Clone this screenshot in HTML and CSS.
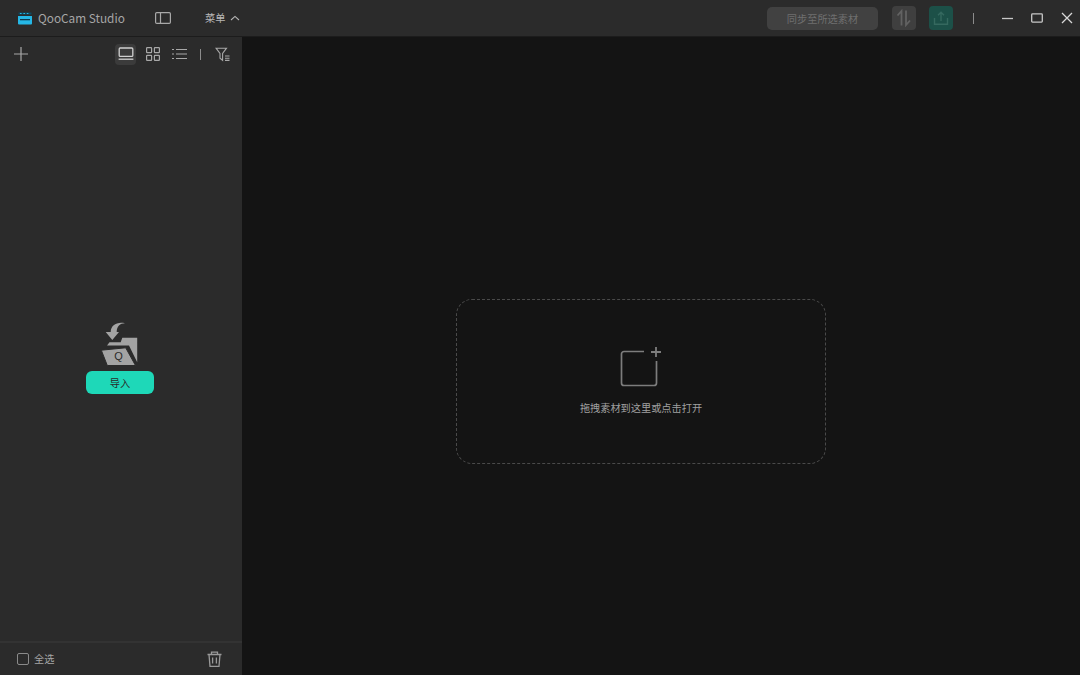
FILE: index.html
```html
<!DOCTYPE html>
<html lang="zh">
<head>
<meta charset="utf-8">
<title>QooCam Studio</title>
<link rel="stylesheet" href="styles.css">
</head>
<body>
<div class="app">
  <header class="titlebar">
    <svg class="logo" width="16" height="14" viewBox="0 0 16 14"><path d="M1 5h14v7.500a1 1 0 0 1-1 1H2a1 1 0 0 1-1-1z" fill="#25b7e6"/><path d="M3 8h10v1.300H3z" fill="#0f3a4d"/><path d="M1.500 1.500h13v2h-13z" fill="#0d4a63"/><path d="M3 2h1.600v1H3zM6.400 2H8v1H6.400zM9.800 2h1.600v1H9.800z" fill="#25b7e6"/></svg>
    <span class="appname">QooCam Studio</span>
    <svg class="panel-icon" width="16" height="12" viewBox="0 0 16 12" fill="none" stroke="#a8a8a8" stroke-width="1.200"><rect x=".6" y=".6" width="14.800" height="10.800" rx="1.200"/><path d="M5.500.6v10.800"/></svg>
    <span class="menu">菜单</span>
    <svg class="chev" width="10" height="6" viewBox="0 0 10 6" fill="none" stroke="#b5b5b5" stroke-width="1.100"><path d="M1 5l4-3.600L9 5"/></svg>
    <div class="spacer"></div>
    <button class="sync">同步至所选素材</button>
    <div class="square gray">
      <svg width="18" height="18" viewBox="0 0 18 18" fill="none" stroke="#626262" stroke-width="1.800"><path d="M6.500 16.500V2L2.500 6.500"/><path d="M11 1.500V16l4-4.500"/></svg>
    </div>
    <div class="square teal">
      <svg width="18" height="18" viewBox="0 0 18 18" fill="none" stroke="#35695f" stroke-width="1.400"><path d="M9 12V3.500M6 6.200l3-2.900 3 2.900"/><path d="M2.500 9v6.200h13V9"/></svg>
    </div>
    <div class="vline"></div>
    <div class="winbtns">
      <svg width="11" height="11" viewBox="0 0 11 11" fill="none" stroke="#c8c8c8" stroke-width="1.300"><path d="M0 5.500h11"/></svg>
      <svg width="12" height="10" viewBox="0 0 12 10" fill="none" stroke="#c8c8c8" stroke-width="1.300"><rect x=".7" y=".9" width="10.600" height="8.200" rx=".8"/></svg>
      <svg width="12" height="12" viewBox="0 0 12 12" fill="none" stroke="#d8d8d8" stroke-width="1.300"><path d="M1 1l10 10M11 1L1 11"/></svg>
    </div>
  </header>
  <div class="body">
    <aside class="sidebar">
      <div class="toolbar">
        <svg width="14" height="14" viewBox="0 0 14 14" fill="none" stroke="#a8a8a8" stroke-width="1.200"><path d="M7 0v14M0 7h14"/></svg>
        <div class="spacer"></div>
        <div class="view active">
          <svg width="16" height="14" viewBox="0 0 16 14" fill="none" stroke="#d0d0d0" stroke-width="1.300"><rect x="1.200" y="1" width="13.600" height="8.400" rx="1"/><path d="M.6 12.200h14.800"/></svg>
        </div>
        <div class="view">
          <svg width="14" height="14" viewBox="0 0 14 14" fill="none" stroke="#a8a8a8" stroke-width="1.200"><rect x=".6" y=".6" width="5" height="5" rx=".6"/><rect x="8.400" y=".6" width="5" height="5" rx=".6"/><rect x=".6" y="8.400" width="5" height="5" rx=".6"/><rect x="8.400" y="8.400" width="5" height="5" rx=".6"/></svg>
        </div>
        <div class="view">
          <svg width="15" height="12" viewBox="0 0 15 12" fill="none" stroke="#a8a8a8" stroke-width="1.200"><path d="M0 1.500h2M4 1.500h11M0 6h2M4 6h11M0 10.500h2M4 10.500h11"/></svg>
        </div>
        <div class="tool-sep"></div>
        <svg class="filter" width="15" height="15" viewBox="0 0 15 15" fill="none" stroke="#a8a8a8" stroke-width="1.100"><path d="M1 1.200h10.500L7.600 6.500v6.800L5 11.200V6.500z"/><path d="M10 9h4.500M10 11.200h4.500M10 13.400h4.500"/></svg>
      </div>
      <div class="import">
        <svg width="40" height="46" viewBox="0 0 40 46">
          <path d="M10.700 11C10.700 4.500 17 .5 25 2.300C20 2.300 16.700 5.500 16.700 11H19L12.300 19L5.700 11z" fill="#a3a3a3"/>
          <path d="M7 24.500l2.500-3.300h11.200l1.600-4.400h14.900v24.400L29 24.500z" fill="#a3a3a3"/>
          <path d="M1.300 29.200L25.700 26.800L35.500 44.500H7.300z" fill="#a3a3a3" stroke="#2b2b2b" stroke-width="1"/>
          <text x="18.500" y="39" text-anchor="middle" class="q">Q</text>
        </svg>
        <button class="import-btn">导入</button>
      </div>
      <div class="footer">
        <span class="check"></span>
        <span class="all">全选</span>
        <div class="spacer"></div>
        <svg width="15" height="16" viewBox="0 0 15 16" fill="none" stroke="#9a9a9a" stroke-width="1.300"><path d="M.5 3.500h14M4.500 3.500V1.200h6v2.300M2 3.500l1 11.800h9l1-11.800M5.600 6.500v6M9.400 6.500v6"/></svg>
      </div>
    </aside>
    <main class="main">
      <div class="drop">
        <svg width="42" height="42" viewBox="0 0 42 42" fill="none" stroke="#7d7d7d" stroke-width="1.700"><path d="M24 5.500H4a2.500 2.500 0 0 0-2.500 2.500v29A2.500 2.500 0 0 0 4 39.500h30a2.500 2.500 0 0 0 2.500-2.500V15"/><path d="M36 1v10M31 6h10" stroke-width="1.800"/></svg>
        <span class="hint">拖拽素材到这里或点击打开</span>
      </div>
    </main>
  </div>
</div>
</body>
</html>
```

FILE: styles.css
```css
* { box-sizing: border-box; }
html, body { margin: 0; height: 100%; }
body { font-family: "Noto Sans CJK SC", "Noto Sans", sans-serif; background: #141414; overflow: hidden; }
.app { width: 1080px; height: 675px; display: flex; flex-direction: column; }
.spacer { flex: 1; }

.titlebar { height: 37px; flex: none; display: flex; align-items: center; background: #2b2b2b; border-bottom: 1px solid #1c1c1c; padding-left: 17px; padding-right: 7px; }
.logo { flex: none; }
.appname { margin-left: 5px; font-size: 11.800px; color: #a6a6a6; line-height: 1; width: 105px; white-space: nowrap; }
.panel-icon { margin-left: 12px; flex: none; }
.menu { margin-left: 34px; font-size: 10.200px; color: #b8b8b8; line-height: 1; }
.chev { margin-left: 5px; flex: none; }
.sync { width: 111px; height: 23px; border: 0; border-radius: 5px; background: #414141; color: #6f6f6f; font: 10.200px "Noto Sans CJK SC", sans-serif; padding: 0; }
.square { width: 24px; height: 24px; border-radius: 4px; display: flex; align-items: center; justify-content: center; margin-left: 14px; }
.square.gray { background: #3f3f3f; }
.square.teal { margin-left: 13px; background: #1c5048; }
.vline { width: 1px; height: 11px; background: #8c8c8c; margin-left: 20px; }
.winbtns { display: flex; align-items: center; gap: 18px; margin-left: 28px; }

.body { flex: 1; display: flex; min-height: 0; }
.sidebar { width: 242px; flex: none; background: #2b2b2b; display: flex; flex-direction: column; }
.toolbar { height: 34px; flex: none; display: flex; align-items: center; padding-left: 14px; padding-right: 12px; }
.view { width: 21px; height: 21px; border-radius: 4px; display: flex; align-items: center; justify-content: center; margin-left: 6px; }
.view.active { background: #3b3b3b; }
.tool-sep { width: 1px; height: 11px; background: #8c8c8c; margin-left: 10px; margin-right: 14px; }
.filter { flex: none; }

.import { flex: 1; display: flex; flex-direction: column; align-items: center; justify-content: center; padding-top: 2px; padding-right: 2px; }
.q { font: 11px "Liberation Sans", sans-serif; fill: #2b2b2b; }
.import-btn { width: 68px; height: 23px; margin-top: 4px; border: 0; border-radius: 6px; background: #1ed8b8; color: #2a2a2a; font: 10.200px "Noto Sans CJK SC", sans-serif; padding: 0; }

.footer { height: 34px; flex: none; display: flex; align-items: center; border-top: 2px solid #333333; padding-left: 17px; padding-right: 20px; }
.check { width: 12px; height: 12px; border: 1.300px solid #8a8a8a; border-radius: 2px; }
.all { margin-left: 5px; font-size: 10.200px; color: #a6a6a6; line-height: 1; }

.main { flex: 1; display: flex; align-items: flex-start; padding-top: 262px; padding-left: 214px; }
.drop { width: 370px; height: 165px; border: 1px dashed #4a4a4a; border-radius: 16px; display: flex; flex-direction: column; align-items: center; padding-top: 46px; }
.hint { margin-top: 12px; font-size: 10.200px; color: #a0a0a0; line-height: 16px; white-space: nowrap; }
```
